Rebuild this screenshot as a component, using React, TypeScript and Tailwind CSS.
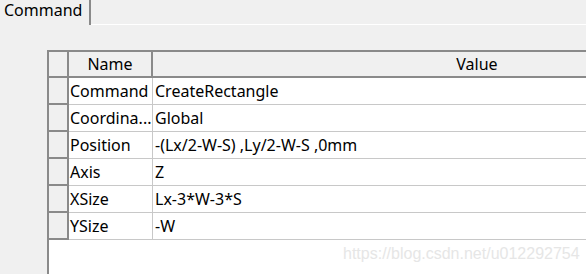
import React from 'react';

const rows: [string, string][] = [
    ['Command', 'CreateRectangle'],
    ['Coordina...', 'Global'],
    ['Position', '-(Lx/2-W-S) ,Ly/2-W-S ,0mm'],
    ['Axis', 'Z'],
    ['XSize', 'Lx-3*W-3*S'],
    ['YSize', '-W'],
];

export default function App() {
    return (
        <div
            className="relative w-[586px] h-[274px] overflow-hidden bg-[#f0f0f0] text-black text-[16px] leading-none"
            style={{ fontFamily: '"Noto Sans", "Open Sans", sans-serif' }}
        >
            {/* Tab strip */}
            <div className="flex h-[25px]">
                <div className="w-[91px] h-[25px] border-r-2 border-[#8a8a8a] flex items-center pl-[4px] pb-[5px]">
                    Command
                </div>
                <div className="flex-1 h-[25px] border-b border-white" />
            </div>

            {/* Property grid */}
            <div className="ml-[47px] mt-[25px] w-[800px] h-[260px] bg-white border-l-2 border-t-2 border-[#8a8a8a]">
                {/* Header */}
                <div className="flex h-[26px] bg-[#f0f0f0] border-b-2 border-[#8a8a8a]">
                    <div className="w-[20px] border-r-2 border-[#8a8a8a]" />
                    <div className="w-[84px] border-r-2 border-[#8a8a8a] flex items-center justify-center">Name</div>
                    <div className="flex-1 flex items-center justify-center pr-[46px]">Value</div>
                </div>

                {rows.map(([name, value]) => (
                    <div key={name} className="flex h-[27px]">
                        <div className="w-[20px] bg-[#f0f0f0] border-r-2 border-b-2 border-[#8a8a8a]" />
                        <div className="w-[84px] border-r border-b border-[#c8c8c8] flex items-center pl-[1px] whitespace-nowrap overflow-hidden">
                            {name}
                        </div>
                        <div className="flex-1 border-b border-[#c8c8c8] flex items-center pl-[2px] whitespace-nowrap">
                            {value}
                        </div>
                    </div>
                ))}
            </div>

            <div
                className="absolute left-[343px] top-[246px] text-[16px] text-[#e6e6e6]"
                style={{ fontFamily: '"Liberation Sans", Arial, sans-serif' }}
            >
                https://blog.csdn.net/u012292754
            </div>
        </div>
    );
}
